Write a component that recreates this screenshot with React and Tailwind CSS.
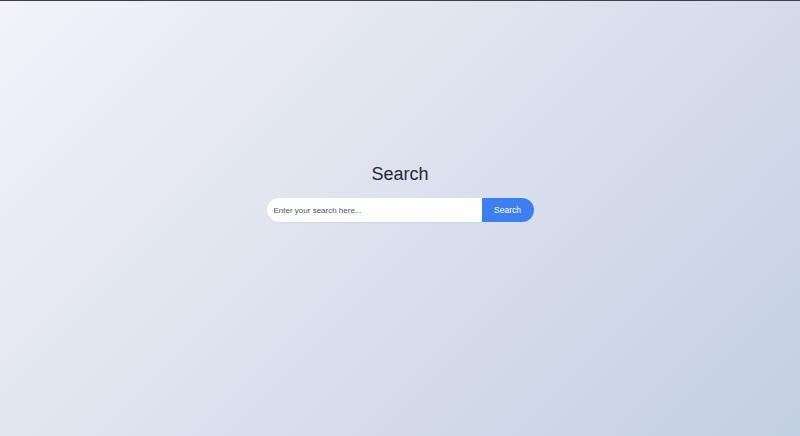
export default function App() {
  return (
    <div className="min-h-screen w-full border-t border-[#3f3f46] bg-[linear-gradient(135deg,#f3f3f9_0%,#c3cfe2_100%)] font-['Liberation_Sans',Arial,sans-serif]">
      <div className="flex h-[435px] flex-col items-center pt-[162px]">
        {/* Title */}
        <h1 className="text-[18px] leading-[22px] text-[#1f2937]">Search</h1>

        {/* Search bar */}
        <form className="mt-[13px] flex h-[24px] w-[267px]" onSubmit={(e) => e.preventDefault()}>
          <input
            type="text"
            placeholder="Enter your search here..."
            className="h-full w-[215px] rounded-l-[12px] border-0 bg-white pl-[7px] text-[8px] text-[#374151] outline-none placeholder:text-[#4b5563] shadow-[0_1px_2px_rgba(0,0,0,0.05)]"
          />
          <button
            type="submit"
            className="h-full w-[52px] rounded-r-[12px] bg-[#3b7ff0] text-[8.5px] text-white"
          >
            Search
          </button>
        </form>
      </div>
    </div>
  );
}
